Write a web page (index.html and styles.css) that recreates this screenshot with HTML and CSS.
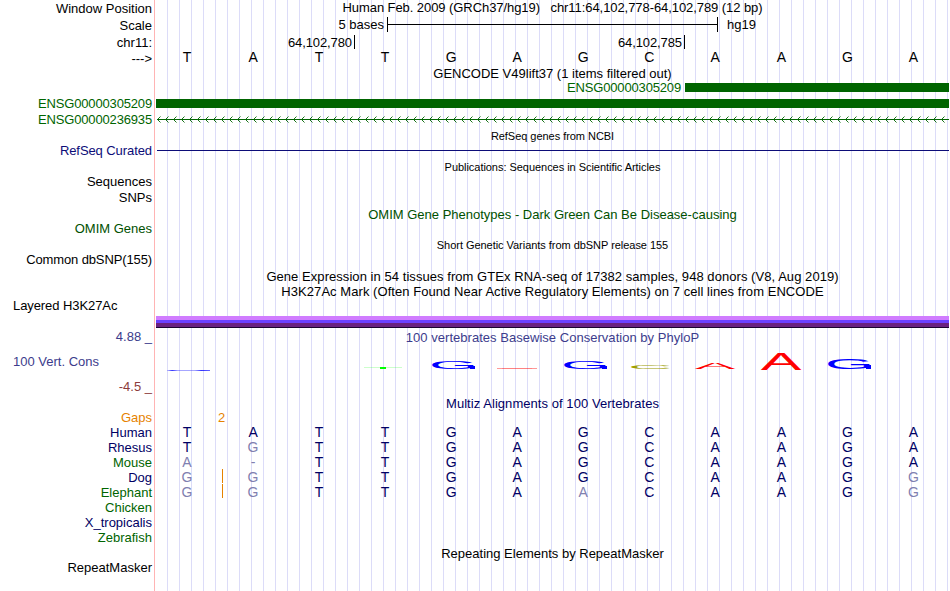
FILE: index.html
```
<!DOCTYPE html>
<html>
<head>
    <meta charset="utf-8">
    <title>Genome Browser</title>
    <link rel="stylesheet" href="styles.css">
</head>
<body>

<div class="browser">

    <div class="row header">
        <div class="label">Window Position</div>
        <div class="data center">Human Feb. 2009 (GRCh37/hg19) &nbsp; chr11:64,102,778-64,102,789 (12 bp)</div>
    </div>
    <div class="row scale">
        <div class="label">Scale</div>
        <div class="data ruler"><span class="bases">5 bases</span><span class="bar"></span><span>hg19</span></div>
    </div>
    <div class="row chrom">
        <div class="label">chr11:</div>
        <div class="data ticks"><span class="tick first">64,102,780</span><span class="tick">64,102,785</span></div>
    </div>
    <div class="row strand">
        <div class="label">---&gt;</div>
        <div class="data seq"><b>T</b><b>A</b><b>T</b><b>T</b><b>G</b><b>A</b><b>G</b><b>C</b><b>A</b><b>A</b><b>G</b><b>A</b></div>
    </div>

    <div class="title">GENCODE V49lift37 (1 items filtered out)</div>
    <div class="row green">
        <div class="label"></div>
        <div class="data gene"><span class="name">ENSG00000305209</span><span class="exon"></span></div>
    </div>
    <div class="row green">
        <div class="label">ENSG00000305209</div>
        <div class="data gene"><span class="exon"></span></div>
    </div>
    <div class="row green">
        <div class="label">ENSG00000236935</div>
        <div class="data">
            <svg class="intron" width="793" height="16">
                <defs>
                    <pattern id="arrow" width="8" height="16" patternUnits="userSpaceOnUse">
                        <path d="M4.5 4.5L1.5 7.5L4.5 10.5" fill="none" stroke="#006400" stroke-width="0.9"/>
                    </pattern>
                </defs>
                <rect x="1" y="7" width="792" height="1" fill="#006400"/>
                <rect width="790" height="16" fill="url(#arrow)"/>
            </svg>
        </div>
    </div>

    <div class="title small">RefSeq genes from NCBI</div>
    <div class="row refseq">
        <div class="label">RefSeq Curated</div>
        <div class="data"><div class="line"></div></div>
    </div>

    <div class="title small">Publications: Sequences in Scientific Articles</div>
    <div class="row"><div class="label">Sequences</div></div>
    <div class="row"><div class="label">SNPs</div></div>

    <div class="title omim">OMIM Gene Phenotypes - Dark Green Can Be Disease-causing</div>
    <div class="row omim"><div class="label">OMIM Genes</div></div>

    <div class="title small">Short Genetic Variants from dbSNP release 155</div>
    <div class="row"><div class="label tight">Common dbSNP(155)</div></div>

    <div class="title wide">Gene Expression in 54 tissues from GTEx RNA-seq of 17382 samples, 948 donors (V8, Aug 2019)</div>
    <div class="title wide">H3K27Ac Mark (Often Found Near Active Regulatory Elements) on 7 cell lines from ENCODE</div>
    <div class="row h3k">
        <div class="label left">Layered H3K27Ac</div>
        <div class="data"><div class="signal"></div></div>
    </div>

    <div class="row cons-head">
        <div class="label">4.88 _</div>
        <div class="data center">100 vertebrates Basewise Conservation by PhyloP</div>
    </div>
    <div class="row cons">
        <div class="label left">100 Vert. Cons</div>
        <div class="data">
            <svg class="logo" width="793" height="51">
                <defs>
                    <linearGradient id="flat">
                        <stop offset="0" stop-color="#00f" stop-opacity=".2"/>
                        <stop offset=".12" stop-color="#00f" stop-opacity=".8"/>
                        <stop offset=".25" stop-color="#00f" stop-opacity=".35"/>
                        <stop offset=".65" stop-color="#00f" stop-opacity=".35"/>
                        <stop offset=".8" stop-color="#00f" stop-opacity=".8"/>
                        <stop offset="1" stop-color="#00f" stop-opacity=".6"/>
                    </linearGradient>
                </defs>
                <rect x="11" y="26" width="43" height="1" fill="url(#flat)"/>
                <rect x="208" y="23" width="38" height="1" fill="#0f0" opacity=".2"/>
                <rect x="224" y="23" width="6" height="2" fill="#0f0"/>
                <text class="g" transform="translate(297.5 25) scale(6.3 1)">G</text>
                <rect class="g" x="314" y="22" width="5" height="3"/>
                <rect x="341" y="24" width="40" height="1" fill="#f00" opacity=".4"/>
                <rect x="346" y="24" width="30" height="1" fill="#f00" opacity=".15"/>
                <text class="g" transform="translate(429.5 25) scale(6.3 1)">G</text>
                <rect class="g" x="446" y="22" width="5" height="3"/>
                <text class="c" transform="translate(494 25) scale(6.1 .53)">C</text>
                <text class="a" transform="translate(559 25) scale(6.1 .9)">A</text>
                <text class="a" transform="translate(625 26) scale(6.1 2.47)">A</text>
                <text class="g" transform="translate(693.5 25) scale(6.3 1.38)">G</text>
                <rect class="g" x="710" y="21" width="5" height="4"/>
            </svg>
        </div>
    </div>
    <div class="row cons-foot"><div class="label">-4.5 _</div></div>

    <div class="title navy wide">Multiz Alignments of 100 Vertebrates</div>
    <div class="row species gaps">
        <div class="label">Gaps</div>
        <div class="data"><span class="count">2</span></div>
    </div>
    <div class="row species navy">
        <div class="label">Human</div>
        <div class="data seq"><b>T</b><b>A</b><b>T</b><b>T</b><b>G</b><b>A</b><b>G</b><b>C</b><b>A</b><b>A</b><b>G</b><b>A</b></div>
    </div>
    <div class="row species navy">
        <div class="label">Rhesus</div>
        <div class="data seq"><b>T</b><b class="diff">G</b><b>T</b><b>T</b><b>G</b><b>A</b><b>G</b><b>C</b><b>A</b><b>A</b><b>G</b><b>A</b></div>
    </div>
    <div class="row species dkgreen">
        <div class="label">Mouse</div>
        <div class="data seq"><b class="diff">A</b><b class="diff">-</b><b>T</b><b>T</b><b>G</b><b>A</b><b>G</b><b>C</b><b>A</b><b>A</b><b>G</b><b>A</b></div>
    </div>
    <div class="row species navy">
        <div class="label">Dog</div>
        <div class="data seq"><b class="diff insert">G</b><b class="diff">G</b><b>T</b><b>T</b><b>G</b><b>A</b><b>G</b><b>C</b><b>A</b><b>A</b><b>G</b><b class="diff">G</b></div>
    </div>
    <div class="row species dkgreen">
        <div class="label">Elephant</div>
        <div class="data seq"><b class="diff insert">G</b><b class="diff">G</b><b>T</b><b>T</b><b>G</b><b>A</b><b class="diff">A</b><b>C</b><b>A</b><b>A</b><b>G</b><b class="diff">G</b></div>
    </div>
    <div class="row species dkgreen"><div class="label">Chicken</div></div>
    <div class="row species navy"><div class="label">X_tropicalis</div></div>
    <div class="row species dkgreen"><div class="label">Zebrafish</div></div>

    <div class="title">Repeating Elements by RepeatMasker</div>
    <div class="row"><div class="label">RepeatMasker</div></div>

</div>

</body>
</html>
```

FILE: styles.css
```
body { margin: 0; background: #fff; overflow: hidden; }

.browser {
    width: 949px;
    height: 591px;
    font: 13px/15px "Liberation Sans", Arial, sans-serif;
    color: #000;
    white-space: nowrap;
    /* red divider, then a guide line every 12px */
    background:
        linear-gradient(#ffb4b4, #ffb4b4) 154px 0 / 1px 100% no-repeat,
        repeating-linear-gradient(90deg, #dcdcf8 0, #dcdcf8 1px, transparent 1px, transparent 12px) 167px 0 / 782px 100% no-repeat;
}

.row { display: grid; grid-template-columns: 152px 793px; column-gap: 4px; height: 16px; }
.label { text-align: right; }
.label.left { text-align: left; padding-left: 13px; }
.center { text-align: center; }
.title { height: 14px; padding: 1px 0 0 156px; text-align: center; }
.small { font-size: 11px; letter-spacing: -0.04px; }
.wide { letter-spacing: 0.055px; }
.tight { letter-spacing: -0.12px; }

/* position header */
.header .label { padding-top: 1px; }
.header .data { letter-spacing: -0.07px; }
.scale { height: 19px; }
.scale .label { padding-top: 2px; }
.ruler { display: flex; padding-top: 1px; }
.bases { width: 228px; margin-right: 3px; text-align: right; }
.bar { width: 329px; height: 15px; margin-right: 9px; border: solid #000; border-width: 0 1px; background: linear-gradient(#000, #000) 0 7px / 100% 1px no-repeat; }
.chrom { height: 15px; }
.ticks { display: flex; letter-spacing: -0.1px; }
.tick { width: 327px; height: 14px; padding-right: 2px; border-right: 1px solid #000; text-align: right; }
.tick.first { width: 196px; }
.strand { height: 15px; }
.strand .label { padding-top: 1px; }

.seq { display: grid; grid-template-columns: repeat(12, 66.04px); margin-left: -2px; text-align: center; }
.seq b { position: relative; font-weight: normal; font-size: 14px; }

/* genes */
.green { color: #006400; letter-spacing: -0.16px; }
.gene { display: flex; }
.name { width: 525px; margin-right: 4px; text-align: right; }
.exon { flex: 1; height: 9px; margin-top: 3px; background: #006400; }
.intron, .logo { display: block; }
.refseq { color: #0c0c78; letter-spacing: -0.08px; }
.line { height: 1px; margin: 7px 0 0 1px; background: #0c0c78; }
.omim { color: #005000; }

/* signal tracks */
.h3k { height: 31px; }
.h3k .label { letter-spacing: -0.08px; }
.signal { height: 12px; margin-top: 18px; background: linear-gradient(#d07cff 4px, #6c40ff 4px, #6c40ff 7px, #6a2080 7px, #6a2080 11px, #1c0430 11px); }
.cons-head { height: 15px; color: #3c3c8c; }
.cons-head .data { padding-top: 1px; letter-spacing: 0.03px; }
.cons { height: 35px; color: #3c3c8c; }
.cons .label { padding-top: 10px; }
.cons-foot { color: #8c3c3c; }
.logo text { font-size: 10px; text-anchor: middle; }
.a { fill: #f00; }
.g { fill: #00f; }
.c { fill: #a0a000; }

/* alignments */
.species { height: 15px; }
.navy { color: #000064; }
.dkgreen .label { color: #006400; }
.dkgreen .seq { color: #000064; }
.gaps { color: #e68200; }
.count { margin-left: 62px; }
.seq .diff { color: #8080b0; }
.insert::after { content: ""; position: absolute; left: 68px; top: -1px; width: 1px; height: 14px; background: #e68200; }
```
